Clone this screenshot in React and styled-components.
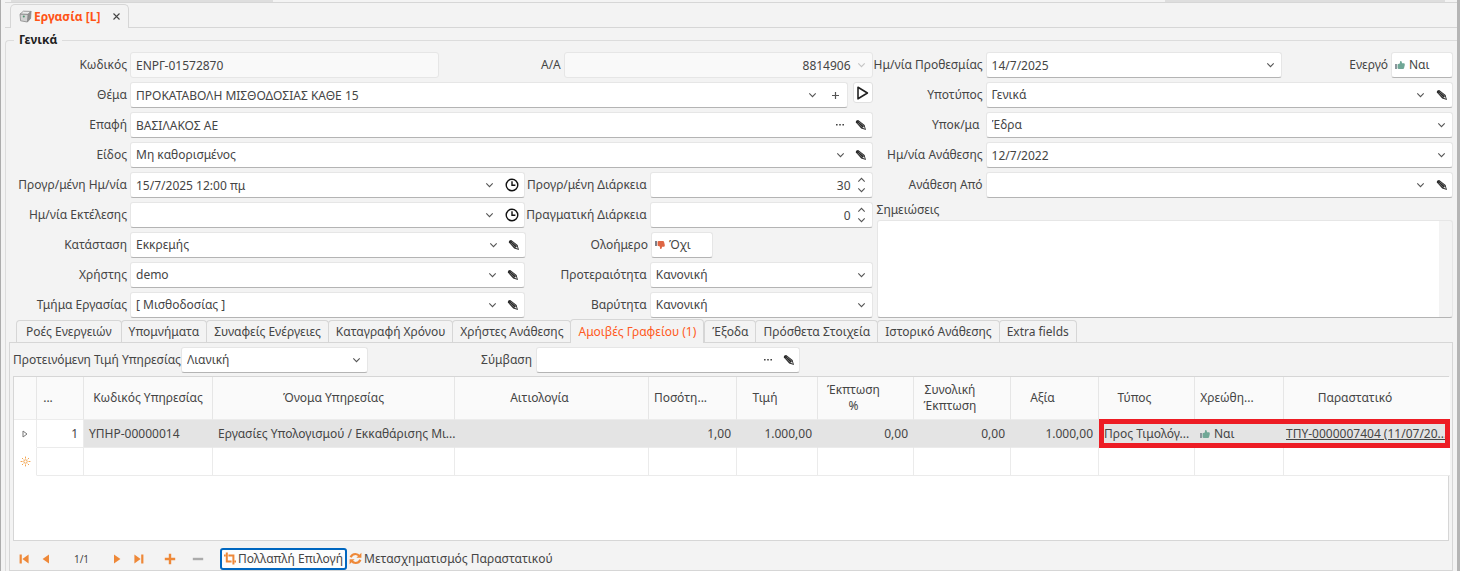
import styled, { createGlobalStyle } from 'styled-components';

const FONT = '"Noto Sans", "Open Sans", sans-serif';

const columns = [
  { width: 23, title: '' },
  { width: 47, title: '...', filter: true },
  { width: 129, title: 'Κωδικός Υπηρεσίας' },
  { width: 242, title: 'Όνομα Υπηρεσίας' },
  { width: 194, title: 'Αιτιολογία', filter: true },
  { width: 88, title: 'Ποσότη...', filter: true },
  { width: 81, title: 'Τιμή', filter: true },
  { width: 96, title: 'Έκπτωση\n%', filter: true },
  { width: 97, title: 'Συνολική\nΈκπτωση', filter: true },
  { width: 88, title: 'Αξία', filter: true },
  { width: 96, title: 'Τύπος', filter: true },
  { width: 89, title: 'Χρεώθη...', filter: true },
  { width: 166, title: 'Παραστατικό', filter: true },
];

const tabs = [
  'Ροές Ενεργειών',
  'Υπομνήματα',
  'Συναφείς Ενέργειες',
  'Καταγραφή Χρόνου',
  'Χρήστες Ανάθεσης',
  'Αμοιβές Γραφείου (1)',
  'Έξοδα',
  'Πρόσθετα Στοιχεία',
  'Ιστορικό Ανάθεσης',
  'Extra fields',
];

const ChevronIcon = ({ up }) => (
  <svg width="9" height="6" viewBox="0 0 9 6" fill="none" stroke="currentColor" strokeWidth="1.1">
    <path d={up ? 'M1.3 4.6 4.5 1.4 7.7 4.6' : 'M1.3 1.4 4.5 4.6 7.7 1.4'} />
  </svg>
);

const PencilIcon = () => (
  <svg width="12" height="12" viewBox="0 0 12 12">
    <path d="M.9 3.6Q.5 1 3.2 1L9.6 6 11 10.9 6.2 9.4z" fill="#2a2a2a" />
    <path d="M2.6 3.8 7.2 8.4M3.7 2.7 8.8 6.9" stroke="#a5a5a5" strokeWidth=".6" />
    <path d="M7.4 8.8 9 7.2 9.9 9.7z" fill="#e2e2e2" />
  </svg>
);

const ClockIcon = () => (
  <svg width="14" height="14" viewBox="0 0 14 14" fill="none" stroke="#111" strokeWidth="1.4">
    <circle cx="7" cy="7" r="5.8" />
    <path d="M7 3.2V7.3H10.4" />
  </svg>
);

const PlusIcon = () => (
  <svg width="9" height="9" viewBox="0 0 9 9" stroke="#555" strokeWidth="1.2">
    <path d="M4.5 1v7M1 4.5h7" />
  </svg>
);

const DotsIcon = () => (
  <svg width="10" height="4" viewBox="0 0 10 4" fill="#444">
    <path d="M1 1h1.6v1.5H1zM4.2 1h1.6v1.5H4.2zM7.4 1H9v1.5H7.4z" />
  </svg>
);

const PlayIcon = () => (
  <svg width="13" height="14" viewBox="0 0 13 14" fill="none" stroke="#222" strokeWidth="1.6" strokeLinejoin="round">
    <path d="M2 1.2 11.4 7 2 12.8z" />
  </svg>
);

const ThumbIcon = ({ down }) => (
  <svg width="10" height="10" viewBox="0 0 10 10">
    <g transform={down ? 'matrix(1 0 0 -1 0 10)' : undefined}>
      <path d="M0 4h2v5H0z" fill={down ? '#7e7f88' : '#8b969c'} />
      <path d="M2.6 4.2 4.8 3.4 5.2 1Q7.2.8 7 3.2H9Q10 3.4 9.8 5L9 8.2Q8.8 9 8 9H3.6L2.6 8.6z" fill={down ? '#de6644' : '#70a796'} />
    </g>
  </svg>
);

const BoxIcon = () => (
  <svg width="13" height="13" viewBox="0 0 13 13" stroke="#888" strokeWidth=".8" strokeLinejoin="round">
    <path d="M1 4.2 4.4 1.2 12 1.4 9 4.4z" fill="#ececec" />
    <path d="M9 4.4 12 1.4 11.6 8.4 8.4 12z" fill="#8e8e8e" />
    <path d="M1 4.2 9 4.4 8.4 12 1.6 10.8z" fill="#d2d2d2" />
    <circle cx="4.8" cy="6.6" r="1" fill="#4d9470" stroke="none" />
  </svg>
);

const NewRowIcon = () => (
  <svg width="11" height="11" viewBox="0 0 11 11" fill="none" stroke="#f3a550" strokeWidth="1">
    <circle cx="5.5" cy="5.5" r="1.7" />
    <path d="M5.5.6v1.9M5.5 8.5v1.9M.6 5.5h1.9M8.5 5.5h1.9M2 2l1.3 1.3M7.7 7.7 9 9M9 2 7.7 3.3M3.3 7.7 2 9" />
  </svg>
);

const NavIcon = ({ d, color = '#ee8838' }) => (
  <svg width="12" height="12" viewBox="0 0 12 12" fill={color}>
    <path d={d} />
  </svg>
);

const CropIcon = () => (
  <svg width="12" height="13" viewBox="0 0 12 13" fill="none" stroke="#ee8838" strokeWidth="2">
    <path d="M0 3.6h1.6M4.4 3.6H9.4V12.4M2.8.6V9.6h4.8M10.6 9.6H12" />
  </svg>
);

const RefreshIcon = () => (
  <svg width="13" height="13" viewBox="0 0 13 13" fill="none" stroke="#ee8838" strokeWidth="2.2">
    <path d="M1.6 5.2Q3 2 6.4 2 8.8 2 10.6 4.2M11.4 7.8Q10 11 6.6 11 4.2 11 2.4 8.8" />
    <path d="M12.4.8V5.8H7.4zM.6 12.2V7.2H5.6z" fill="#ee8838" stroke="none" />
  </svg>
);

const SelectBox = ({ id, value, grow, pencil }) => (
  <Box $grow={grow}>
    <Select id={id} defaultValue={value}>
      <option>{value}</option>
    </Select>
    <Slot><ChevronIcon /></Slot>
    {pencil && <IconButton aria-label="Επεξεργασία"><PencilIcon /></IconButton>}
  </Box>
);

const DateBox = ({ id, value, grow, clock }) => (
  <Box $grow={grow}>
    <Input id={id} defaultValue={value} />
    <IconButton aria-label="Ημερολόγιο" $wide={clock}><ChevronIcon /></IconButton>
    {clock && <IconButton aria-label="Ώρα" $wide><ClockIcon /></IconButton>}
  </Box>
);

const SpinBox = ({ id, value, grow }) => (
  <Box $grow={grow}>
    <Input id={id} defaultValue={value} $right />
    <Spinner>
      <SpinButton aria-label="Αύξηση"><ChevronIcon up /></SpinButton>
      <SpinButton aria-label="Μείωση"><ChevronIcon /></SpinButton>
    </Spinner>
  </Box>
);

const LeftFields = () => (
  <Rows>
    <Row>
      <Label htmlFor="code">Κωδικός</Label>
      <Box $readOnly><Input id="code" defaultValue="ΕΝΡΓ-01572870" readOnly /></Box>
      <Label htmlFor="aa" $second>Α/Α</Label>
      <Box $readOnly>
        <Input id="aa" defaultValue="8814906" readOnly $right />
        <Slot $muted><ChevronIcon /></Slot>
      </Box>
    </Row>
    <Row>
      <Label htmlFor="subject">Θέμα</Label>
      <Box>
        <Input id="subject" defaultValue="ΠΡΟΚΑΤΑΒΟΛΗ ΜΙΣΘΟΔΟΣΙΑΣ ΚΑΘΕ 15" />
        <IconButton $wide aria-label="Λίστα"><ChevronIcon /></IconButton>
        <IconButton $wide aria-label="Προσθήκη"><PlusIcon /></IconButton>
      </Box>
      <PlayButton aria-label="Εκτέλεση"><PlayIcon /></PlayButton>
    </Row>
    <Row>
      <Label htmlFor="contact">Επαφή</Label>
      <Box>
        <Input id="contact" defaultValue="ΒΑΣΙΛΑΚΟΣ ΑΕ" />
        <IconButton aria-label="Αναζήτηση"><DotsIcon /></IconButton>
        <IconButton aria-label="Επεξεργασία"><PencilIcon /></IconButton>
      </Box>
    </Row>
    <Row>
      <Label htmlFor="kind">Είδος</Label>
      <SelectBox id="kind" value="Μη καθορισμένος" pencil />
    </Row>
    <Row>
      <Label htmlFor="planned">Προγρ/μένη Ημ/νία</Label>
      <DateBox id="planned" value="15/7/2025 12:00 πμ" grow={16} clock />
      <Label htmlFor="plannedTime" $second>Προγρ/μένη Διάρκεια</Label>
      <SpinBox id="plannedTime" value="30" grow={9} />
    </Row>
    <Row>
      <Label htmlFor="done">Ημ/νία Εκτέλεσης</Label>
      <DateBox id="done" value="" grow={16} clock />
      <Label htmlFor="realTime" $second>Πραγματική Διάρκεια</Label>
      <SpinBox id="realTime" value="0" grow={9} />
    </Row>
    <Row>
      <Label htmlFor="status">Κατάσταση</Label>
      <SelectBox id="status" value="Εκκρεμής" grow={16} pencil />
      <Label htmlFor="allDay" $second>Ολοήμερο</Label>
      <Cell $grow={9}>
        <Toggle id="allDay"><ThumbIcon down />Όχι</Toggle>
      </Cell>
    </Row>
    <Row>
      <Label htmlFor="user">Χρήστης</Label>
      <SelectBox id="user" value="demo" grow={16} pencil />
      <Label htmlFor="priority" $second>Προτεραιότητα</Label>
      <SelectBox id="priority" value="Κανονική" grow={9} />
    </Row>
    <Row>
      <Label htmlFor="dept">Τμήμα Εργασίας</Label>
      <SelectBox id="dept" value="[ Μισθοδοσίας ]" grow={16} pencil />
      <Label htmlFor="weight" $second>Βαρύτητα</Label>
      <SelectBox id="weight" value="Κανονική" grow={9} />
    </Row>
  </Rows>
);

const RightFields = () => (
  <Rows>
    <Row>
      <Label htmlFor="deadline" $narrow>Ημ/νία Προθεσμίας</Label>
      <DateBox id="deadline" value="14/7/2025" />
      <Label htmlFor="active" $narrow>Ενεργό</Label>
      <Toggle id="active"><ThumbIcon />Ναι</Toggle>
    </Row>
    <Row>
      <Label htmlFor="subtype" $narrow>Υποτύπος</Label>
      <SelectBox id="subtype" value="Γενικά" pencil />
    </Row>
    <Row>
      <Label htmlFor="branch" $narrow>Υποκ/μα&nbsp;</Label>
      <SelectBox id="branch" value="Έδρα" />
    </Row>
    <Row>
      <Label htmlFor="assigned" $narrow>Ημ/νία Ανάθεσης</Label>
      <DateBox id="assigned" value="12/7/2022" />
    </Row>
    <Row>
      <Label htmlFor="assignedBy" $narrow>Ανάθεση Από</Label>
      <SelectBox id="assignedBy" value="" pencil />
    </Row>
    <NotesField>
      <NotesLabel htmlFor="notes">Σημειώσεις</NotesLabel>
      <NotesArea id="notes" />
    </NotesField>
  </Rows>
);

const ServicesTable = () => (
  <Table>
    <colgroup>
      {columns.map((col, i) => <col key={i} width={col.width} />)}
    </colgroup>
    <thead>
      <tr>
        {columns.map((col, i) => <Th key={i} $filter={col.filter}>{col.title}</Th>)}
      </tr>
    </thead>
    <tbody>
      <tr>
        <Td $marker>
          <svg width="6" height="8" viewBox="0 0 6 8" fill="none" stroke="#777">
            <path d="M1 1 5 4 1 7z" />
          </svg>
        </Td>
        <Td $right>1</Td>
        <Td $selected>ΥΠΗΡ-00000014</Td>
        <Td $selected>Εργασίες Υπολογισμού / Εκκαθάρισης Μι...</Td>
        <Td $selected />
        <Td $selected $right>1,00</Td>
        <Td $selected $right>1.000,00</Td>
        <Td $selected $right>0,00</Td>
        <Td $selected $right>0,00</Td>
        <Td $selected $right>1.000,00</Td>
        <MarkedTd $selected $edge="left">Προς Τιμολόγ...</MarkedTd>
        <MarkedTd $selected>
          <Flag><ThumbIcon />Ναι</Flag>
        </MarkedTd>
        <MarkedTd $selected $edge="right">
          <DocLink href="#document">ΤΠΥ-0000007404 (11/07/20...</DocLink>
        </MarkedTd>
      </tr>
      <tr>
        <Td $marker><NewRowIcon /></Td>
        {columns.slice(1).map((col, i) => <Td key={i} />)}
      </tr>
    </tbody>
  </Table>
);

export default function App() {
  return (
    <Window>
      <GlobalStyle />
      <TopEdge><EdgeShade $width={262} /><EdgeShade $width={280} /></TopEdge>
      <DocTabs>
        <DocTab>
          <BoxIcon />
          <DocTitle>Εργασία [L]</DocTitle>
          <CloseButton aria-label="Κλείσιμο">
            <svg width="7" height="7" viewBox="0 0 7 7" stroke="#444" strokeWidth="1.1">
              <path d="M.5.5l6 6M6.5.5l-6 6" />
            </svg>
          </CloseButton>
        </DocTab>
      </DocTabs>
      <Group>
        <Legend>Γενικά</Legend>
        <Form>
          <LeftFields />
          <RightFields />
        </Form>
        <TabList role="tablist">
          {tabs.map((tab, i) => (
            <Tab key={tab} role="tab" aria-selected={i === 5} $active={i === 5}>{tab}</Tab>
          ))}
        </TabList>
        <Panel>
          <PanelBar>
            <PlainLabel htmlFor="price">Προτεινόμενη Τιμή Υπηρεσίας</PlainLabel>
            <PriceField><SelectBox id="price" value="Λιανική" /></PriceField>
            <ContractLabel htmlFor="contract">Σύμβαση</ContractLabel>
            <ContractField>
              <Box>
                <Input id="contract" />
                <IconButton aria-label="Αναζήτηση"><DotsIcon /></IconButton>
                <IconButton aria-label="Επεξεργασία"><PencilIcon /></IconButton>
              </Box>
            </ContractField>
          </PanelBar>
          <TableArea><ServicesTable /></TableArea>
          <Footer>
            <NavButton aria-label="Πρώτη"><NavIcon d="M1.6 1.6h2.2v8.8H1.6zM10.6 1.6v8.8L4.4 6z" /></NavButton>
            <NavButton aria-label="Προηγούμενη"><NavIcon d="M9 1.6v8.8L2.6 6z" /></NavButton>
            <Counter>1/1</Counter>
            <NavButton aria-label="Επόμενη"><NavIcon d="M3 1.6v8.8L9.4 6z" /></NavButton>
            <NavButton aria-label="Τελευταία"><NavIcon d="M8.2 1.6h2.2v8.8H8.2zM1.4 1.6v8.8L7.6 6z" /></NavButton>
            <EditActions>
              <EditButton aria-label="Προσθήκη"><NavIcon d="M4.8.8h2.4v4h4v2.4h-4v4H4.8v-4h-4V4.8h4z" /></EditButton>
              <EditButton aria-label="Διαγραφή"><NavIcon d="M.8 4.8h10.4v2.4H.8z" color="#ababab" /></EditButton>
            </EditActions>
            <ActionButton $focused><CropIcon />Πολλαπλή Επιλογή</ActionButton>
            <ActionButton><RefreshIcon />Μετασχηματισμός Παραστατικού</ActionButton>
          </Footer>
        </Panel>
      </Group>
    </Window>
  );
}

const GlobalStyle = createGlobalStyle`
  * {
    box-sizing: border-box;
  }

  body {
    margin: 0;
    background: #f3f3f3;
    color: #454545;
    font-family: ${FONT};
    font-size: 12px;
    line-height: 16px;
  }

  button, input, select, textarea {
    margin: 0;
    padding: 0;
    border: none;
    background: none;
    color: inherit;
    font: inherit;
  }

  svg {
    display: block;
    flex-shrink: 0;
  }
`;

const Window = styled.div`
  display: flex;
  flex-direction: column;
  min-height: 100vh;
  padding-left: 4px;
  border-left: 1px solid #acacac;
  border-right: 3px solid #b5b5b5;
`;

const TopEdge = styled.div`
  display: flex;
  justify-content: space-between;
  height: 3px;
  padding: 0 12px 0 6px;
  border-bottom: 1px solid #d6d6d6;
`;

const EdgeShade = styled.div`
  width: ${({ $width }) => $width}px;
  height: 2px;
  background: #dedede;
`;

const DocTabs = styled.div`
  display: flex;
  height: 25px;
  padding: 1px 0 0 5px;
  border-bottom: 1px solid #d6d6d6;
`;

const DocTab = styled.div`
  display: flex;
  align-items: center;
  height: 24px;
  width: 119px;
  padding-left: 8px;
  border: 1px solid #d6d6d6;
  border-bottom: none;
  border-radius: 5px 5px 0 0;
  background: #f3f3f3;
`;

const DocTitle = styled.span`
  margin-left: 2px;
  color: #ff5316;
  font-weight: 700;
  white-space: nowrap;
`;

const CloseButton = styled.button`
  margin: 0 8px 0 auto;
`;

const Group = styled.fieldset`
  flex: 1;
  min-width: 0;
  margin: 4px 0 0;
  padding: 4px 4px 0 2px;
  border: solid #dcdcdc;
  border-width: 1px 0 0 1px;
  border-top-left-radius: 4px;
`;

const Legend = styled.legend`
  margin-left: 6px;
  padding: 0 5px;
  color: #1f1f1f;
  font-weight: 700;
`;

const Form = styled.div`
  display: grid;
  grid-template-columns: minmax(0, 3fr) minmax(0, 2fr);
  gap: 4px;
`;

const Rows = styled.div`
  display: grid;
  grid-template-rows: repeat(9, 26px);
  gap: 4px;
`;

const Row = styled.div`
  display: flex;
  min-width: 0;
`;

const Label = styled.label`
  display: flex;
  flex: none;
  justify-content: flex-end;
  width: ${({ $second, $narrow }) => ($second ? 125 : $narrow ? 109 : 122)}px;
  padding-right: 3px;
  line-height: 26px;
  white-space: nowrap;
`;

const Box = styled.div`
  display: flex;
  flex: ${({ $grow }) => $grow || 1} 1 0;
  align-items: center;
  min-width: 0;
  height: 26px;
  border: 1px solid #e6e6e6;
  border-bottom-color: ${({ $readOnly }) => ($readOnly ? '#e6e6e6' : '#b4b4b4')};
  border-radius: 3px;
  background: ${({ $readOnly }) => ($readOnly ? '#f9f9f9' : '#fff')};
`;

const Input = styled.input`
  flex: 1;
  min-width: 0;
  height: 24px;
  padding-left: 5px;
  text-align: ${({ $right }) => ($right ? 'right' : 'left')};
  outline: none;
`;

const Select = styled.select`
  flex: 1;
  min-width: 0;
  height: 24px;
  padding-left: 5px;
  appearance: none;
  outline: none;
`;

const Slot = styled.span`
  display: flex;
  justify-content: center;
  width: 21px;
  color: ${({ $muted }) => ($muted ? '#c4c4c4' : '#555')};
`;

const IconButton = styled.button`
  display: flex;
  align-items: center;
  justify-content: center;
  width: ${({ $wide }) => ($wide ? 23 : 21)}px;
  height: 24px;
  color: #555;
`;

const Spinner = styled.div`
  display: flex;
  flex-direction: column;
  width: 21px;
  color: #555;
`;

const SpinButton = styled.button`
  display: flex;
  align-items: center;
  justify-content: center;
  height: 10px;
`;

const Cell = styled.div`
  flex: ${({ $grow }) => $grow} 1 0;
`;

const Toggle = styled.button`
  display: flex;
  align-items: center;
  gap: 4px;
  width: 62px;
  height: 26px;
  padding-left: 3px;
  border: 1px solid #e6e6e6;
  border-bottom-color: #b4b4b4;
  border-radius: 3px;
  background: #fff;
`;

const PlayButton = styled.button`
  display: flex;
  align-items: center;
  justify-content: center;
  width: 20px;
  height: 21px;
  margin-left: 5px;
  border: 1px solid #e0e0e0;
  border-radius: 3px;
  background: #fff;
`;

const NotesField = styled.div`
  display: flex;
  flex-direction: column;
  grid-row: 6 / 10;
`;

const NotesLabel = styled.label`
  padding-bottom: 2px;
`;

const NotesArea = styled.textarea`
  flex: 1;
  border: 1px solid #e6e6e6;
  border-bottom-color: #b4b4b4;
  border-radius: 3px;
  background: linear-gradient(to left, #f3f3f3 13px, #fff 13px);
  resize: none;
`;

const TabList = styled.div`
  display: flex;
  align-items: flex-end;
  height: 24px;
  padding-left: 8px;
`;

const Tab = styled.button`
  height: ${({ $active }) => ($active ? 24 : 22)}px;
  padding: 0 7px;
  border: 1px solid #d6d6d6;
  border-bottom: none;
  border-radius: 4px 4px 0 0;
  margin: ${({ $active }) => ($active ? '0 0 -1px' : '0 -1px 0 0')};
  background: #f3f3f3;
  color: ${({ $active }) => ($active ? '#ff5a22' : 'inherit')};
  white-space: nowrap;

  &:first-child {
    padding: 0 9px;
  }
`;

const Panel = styled.section`
  display: flex;
  flex-direction: column;
  min-height: calc(100vh - 342px);
  margin-left: 1px;
  padding: 0 3px;
  border: 1px solid #d6d6d6;
`;

const PanelBar = styled.div`
  display: flex;
  padding: 4px 0 3px;
`;

const PlainLabel = styled.label`
  width: 168px;
  line-height: 26px;
  white-space: nowrap;
`;

const PriceField = styled.div`
  display: flex;
  width: 187px;
`;

const ContractLabel = styled(PlainLabel)`
  padding-right: 4px;
  text-align: right;
`;

const ContractField = styled.div`
  display: flex;
  width: 264px;
`;

const TableArea = styled.div`
  flex: 1;
  border: 1px solid #d6d6d6;
  background: #fff;
`;

const Table = styled.table`
  width: 100%;
  table-layout: fixed;
  border-collapse: separate;
  border-spacing: 0;
`;

const Th = styled.th`
  height: 43px;
  padding: 0 ${({ $filter }) => ($filter ? 24 : 0)}px 0 0;
  border-right: 1px solid #e6e6e6;
  border-bottom: 1px solid #ececec;
  background: #fafafa;
  font-weight: 400;
  white-space: pre;

  &:last-child {
    border-right: none;
  }
`;

const Td = styled.td`
  height: 28px;
  padding: 0 5px;
  border-right: 1px solid ${({ $selected }) => ($selected ? '#e4e4e4' : '#ebebeb')};
  border-bottom: 1px solid ${({ $marker }) => ($marker ? '#fff' : '#ebebeb')};
  background: ${({ $selected }) => ($selected ? '#e4e4e4' : '#fff')};
  text-align: ${({ $right }) => ($right ? 'right' : 'left')};
  white-space: nowrap;

  &:last-child {
    border-right: none;
  }

  svg {
    margin: ${({ $marker }) => ($marker ? '0 auto' : '0')};
  }
`;

const MarkedTd = styled(Td)`
  position: relative;
  padding: 0 ${({ $edge }) => ($edge === 'right' ? 2 : 5)}px;

  &::after {
    content: '';
    position: absolute;
    inset: -1px ${({ $edge }) => ($edge === 'right' ? 0 : -1)}px -1px 0;
    border: solid #ed1c24;
    border-width: 5px ${({ $edge }) => ($edge === 'right' ? 5 : 0)}px 5px ${({ $edge }) => ($edge === 'left' ? 5 : 0)}px;
    pointer-events: none;
  }
`;

const Flag = styled.span`
  display: flex;
  align-items: center;
  gap: 4px;
`;

const DocLink = styled.a`
  color: inherit;
`;

const Footer = styled.div`
  display: flex;
  align-items: center;
  height: 29px;
  padding-top: 6px;
`;

const NavButton = styled.button`
  display: flex;
  justify-content: center;
  width: 22px;
`;

const Counter = styled.span`
  width: 49px;
  font-size: 10px;
  text-align: center;
`;

const EditActions = styled.div`
  display: flex;
  padding: 0 8px 0 6px;
`;

const EditButton = styled(NavButton)`
  width: 28px;
`;

const ActionButton = styled.button`
  display: flex;
  align-items: center;
  gap: 2px;
  height: 22px;
  padding: 0 2px;
  border: 2px solid ${({ $focused }) => ($focused ? '#0067c0' : 'transparent')};
  border-radius: 3px;
  background: ${({ $focused }) => ($focused ? '#fdfdfd' : 'transparent')};
  white-space: nowrap;

  & + & {
    padding: 0;
  }
`;
